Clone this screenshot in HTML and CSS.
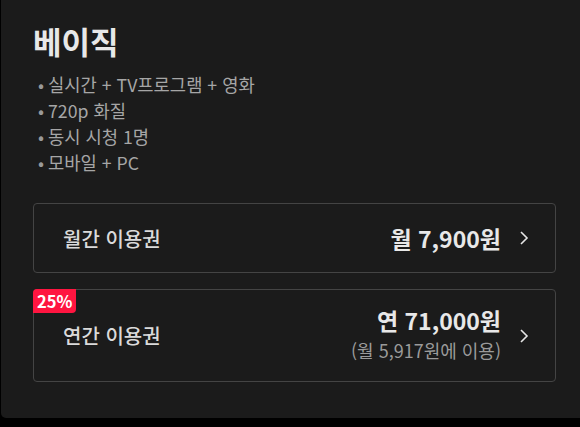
FILE: index.html
```html
<!DOCTYPE html>
<html lang="ko">
<head>
  <meta charset="UTF-8">
  <title>베이직</title>
  <link rel="stylesheet" href="styles.css">
</head>
<body>

<div class="plan-card">
  <h2 class="plan-title">베이직</h2>
  <ul class="plan-features">
    <li>실시간 + TV프로그램 + 영화</li>
    <li>720p 화질</li>
    <li>동시 시청 1명</li>
    <li>모바일 + PC</li>
  </ul>

  <div class="ticket">
    <span class="ticket-name">월간 이용권</span>
    <div class="ticket-price">
      <strong>월 7,900원</strong>
    </div>
    <svg class="chevron" viewBox="0 0 10 16" width="10" height="16"><path d="M2 2l6 6-6 6" fill="none" stroke="#e6e6e6" stroke-width="1.6"/></svg>
  </div>

  <div class="ticket ticket-tall">
    <span class="badge">25%</span>
    <span class="ticket-name">연간 이용권</span>
    <div class="ticket-price">
      <strong>연 71,000원</strong>
      <span class="ticket-sub">(월 5,917원에 이용)</span>
    </div>
    <svg class="chevron" viewBox="0 0 10 16" width="10" height="16"><path d="M2 2l6 6-6 6" fill="none" stroke="#e6e6e6" stroke-width="1.6"/></svg>
  </div>
</div>

</body>
</html>
```

FILE: styles.css
```css
body {
  margin: 0;
  background-color: #000;
  font-family: "Noto Sans CJK KR", "Noto Sans", sans-serif;
  overflow: hidden;
}
.plan-card {
  margin-left: 1px;
  width: 610px;
  height: 418px;
  box-sizing: border-box;
  background-color: #1b1b1b;
  border-bottom-left-radius: 5px;
  padding: 20px 0 0 32px;
}
.plan-title {
  margin: 0;
  font-size: 31px;
  font-weight: 700;
  color: #e8e8e8;
  line-height: 42px;
}
.plan-features {
  list-style: none;
  margin: 9px 0 0;
  padding: 0;
}
.plan-features li {
  font-size: 17.7px;
  line-height: 26px;
  color: #a6a6a6;
  padding-left: 5px;
}
.plan-features li::before {
  content: "•";
  margin-right: 4px;
  color: #999;
}
.ticket {
  position: relative;
  width: 523px;
  height: 70px;
  box-sizing: border-box;
  border: 1px solid #444;
  border-radius: 4px;
  margin-top: 28px;
  padding: 0 26px 0 29px;
  display: flex;
  align-items: center;
}
.ticket + .ticket {
  margin-top: 16px;
}
.ticket-tall {
  height: 93px;
}
.ticket-tall .ticket-price {
  margin-bottom: 4px;
}
.ticket-name {
  font-size: 20px;
  font-weight: 500;
  color: #dadada;
  flex: 1;
}
.ticket-price {
  display: flex;
  flex-direction: column;
  align-items: flex-end;
  margin-right: 18px;
}
.ticket-price strong {
  font-size: 23px;
  font-weight: 700;
  color: #e8e8e8;
  line-height: 30px;
}
.ticket-sub {
  font-size: 18px;
  color: #9a9a9a;
  line-height: 24px;
  margin-top: 3px;
}
.chevron {
  display: block;
}
.badge {
  position: absolute;
  top: -1px;
  left: -1px;
  background-color: #ff1540;
  color: #fff;
  font-size: 16.5px;
  font-weight: 700;
  line-height: 24px;
  padding: 0 4px;
  border-radius: 4px 0 4px 0;
}
```
